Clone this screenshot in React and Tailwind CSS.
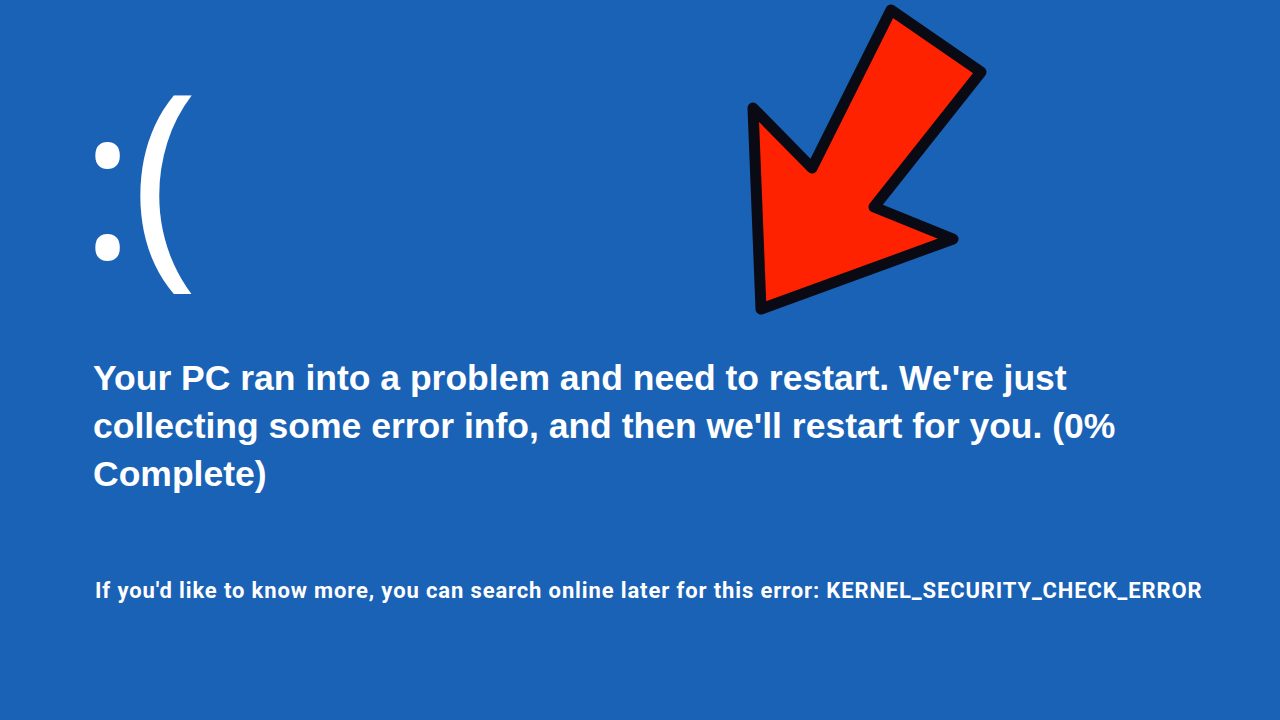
import React from 'react'

export default function App() {
  return (
    <div className="relative w-[1280px] h-[720px] overflow-hidden bg-[#1a62b6] text-white font-['Liberation_Sans',Arial,sans-serif]">
      <div className="flex flex-col pl-[93px] pt-[25px]">
        <div className="h-[321px] leading-[290px] font-normal font-['Open_Sans',sans-serif] -ml-[13px] whitespace-nowrap">
          <span className="text-[210px]">:</span>
          <span className="text-[228px] -ml-[4px]">(</span>
        </div>
        <p className="mt-[8px] text-[35.5px] leading-[48px] font-bold max-w-[1080px]">
          Your PC ran into a problem and need to restart. We're just collecting some error info, and then we'll restart for you. (0% Complete)
        </p>
        <p className="mt-[78px] text-[22px] leading-[30px] font-bold font-['Roboto',sans-serif] tracking-[0.87px] pl-[2px] whitespace-nowrap">
          If you'd like to know more, you can search online later for this error: KERNEL_SECURITY_CHECK_ERROR
        </p>
      </div>

      <svg className="absolute left-0 top-0" width="1280" height="720" viewBox="0 0 1280 720">
        <polygon
          points="891,10 981,72 874,207 953,239 761,309 753,108 812,168"
          fill="#ff2200"
          stroke="#0a0a14"
          strokeWidth="11"
          strokeLinejoin="round"
        />
      </svg>
    </div>
  )
}
